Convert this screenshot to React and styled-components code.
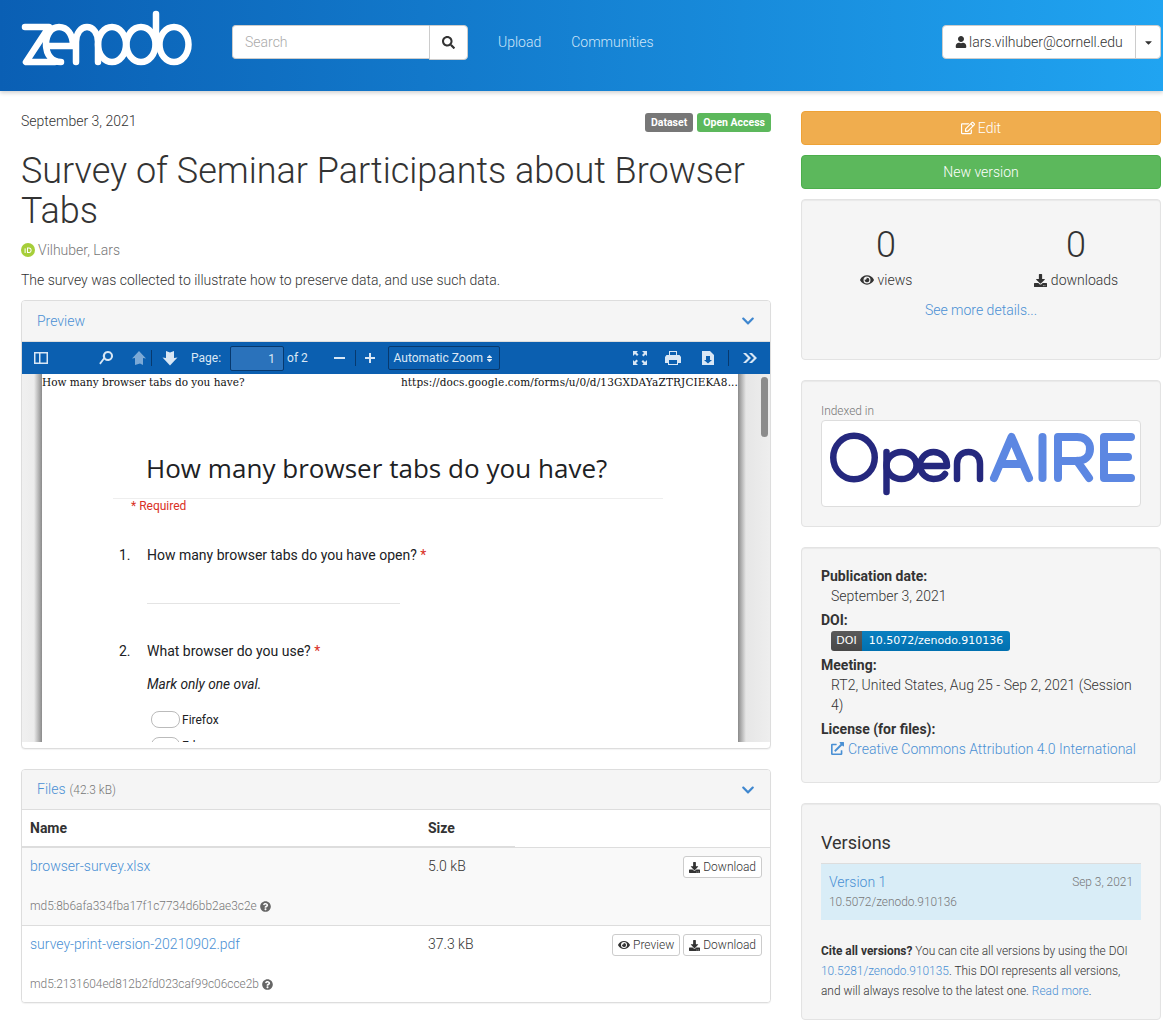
import React from "react"
import styled, { createGlobalStyle } from "styled-components"
import {
  FaSearch,
  FaUser,
  FaRegEdit,
  FaEye,
  FaDownload,
  FaExternalLinkAlt,
  FaQuestionCircle,
  FaChevronDown,
  FaCaretDown,
  FaSort,
} from "react-icons/fa"

const LINK = "#4a90d4"

const GlobalStyle = createGlobalStyle`
  * { box-sizing: border-box; }
  html, body { margin: 0; padding: 0; background: #fff; }
  body {
    font-family: Roboto, "Liberation Sans", sans-serif;
    font-weight: 300;
    font-size: 14px;
    line-height: 20px;
    color: #333;
  }
  a { color: ${LINK}; text-decoration: none; }
`

const TopBar = styled.header`
  height: 91px;
  background: linear-gradient(to right, #0a5fb4, #20a4f1);
  box-shadow: 0 2px 4px rgba(0, 0, 0, 0.18);
  display: flex;
  align-items: flex-start;
  padding: 25px 2px 0 21px;
  position: relative;
`

const Logo = styled.svg`
  width: 172px;
  height: 57px;
  margin-top: -15px;
  flex: none;
`

const SearchGroup = styled.div`
  display: flex;
  margin-left: 39px;
  width: 236px;
`

const SearchInput = styled.div`
  flex: 1;
  height: 34px;
  background: #fff;
  border: 1px solid #ccc;
  border-right: 0;
  border-radius: 4px 0 0 4px;
  padding: 6px 12px;
  color: #aaa;
`

const SearchButton = styled.div`
  width: 39px;
  height: 35px;
  background: #fff;
  border: 1px solid #ccc;
  border-radius: 0 4px 4px 0;
  display: flex;
  align-items: center;
  justify-content: center;
  color: #333;
  font-size: 13px;
`

const NavLink = styled.a`
  color: #cfe5f8;
  margin-left: ${p => p.$gap}px;
  line-height: 34px;
`

const UserMenu = styled.div`
  margin-left: auto;
  display: flex;
  height: 34px;
  background: #fff;
  border: 1px solid #ccc;
  border-radius: 4px;
  width: 219px;
`

const UserName = styled.div`
  flex: 1;
  display: flex;
  align-items: center;
  gap: 2px;
  padding-left: 12px;
  border-right: 1px solid #ccc;
  font-size: 14px;
  svg { font-size: 12px; color: #333; }
`

const Caret = styled.div`
  width: 24px;
  display: flex;
  align-items: center;
  justify-content: center;
  font-size: 11px;
  color: #333;
`

const Page = styled.main`
  display: grid;
  grid-template-columns: 750px 360px;
  column-gap: 30px;
  padding: 20px 0 0 21px;
`

const LeftColumn = styled.div`
  min-width: 0;
`

const RightColumn = styled.aside`
  min-width: 0;
`

const MetaRow = styled.div`
  display: flex;
  justify-content: space-between;
  align-items: flex-start;
`

const Badges = styled.div`
  display: flex;
  gap: 4px;
  padding-top: 2px;
`

const Badge = styled.span`
  background: ${p => p.$bg};
  color: #fff;
  font-weight: 700;
  font-size: 10.5px;
  line-height: 19px;
  height: 19px;
  padding: 0 6px;
  border-radius: 3px;
`

const Title = styled.h1`
  font-size: 36px;
  font-weight: 300;
  line-height: 40px;
  margin: 19px 0 9px;
  color: #333;
`

const Authors = styled.div`
  display: flex;
  align-items: center;
  gap: 3px;
  color: #777;
`

const Description = styled.p`
  margin: 10px 0 10px;
`

const Panel = styled.section`
  border: 1px solid #ddd;
  border-radius: 4px;
  box-shadow: 0 1px 1px rgba(0, 0, 0, 0.05);
  margin-bottom: 20px;
  background: #fff;
  overflow: hidden;
`

const PanelHeading = styled.div`
  height: ${p => p.$height}px;
  padding: 0 15px;
  background: #f5f5f5;
  border-bottom: 1px solid #ddd;
  display: flex;
  align-items: center;
  justify-content: space-between;
  color: ${LINK};
  svg { font-size: 14px; color: #3f87cf; }
  small { font-size: 11.9px; color: #777; margin-left: 4px; }
`

const Viewer = styled.div`
  height: 400px;
  margin-bottom: 6px;
  display: flex;
  flex-direction: column;
`

const ViewerBar = styled.div`
  height: 32px;
  flex: none;
  background: #0b5fb0;
  display: flex;
  align-items: center;
  padding: 0 12px 0 11px;
  color: #dbe8f5;
  font-size: 12px;
  font-weight: 400;
`

const ToolIcon = styled.svg`
  width: 16px;
  height: 16px;
  flex: none;
  margin-left: ${p => p.$left || 0}px;
  fill: #d9e7f5;
  opacity: ${p => (p.$dim ? 0.55 : 1)};
`

const ToolDivider = styled.span`
  width: 1px;
  height: 16px;
  flex: none;
  background: #07396e;
  margin-left: ${p => p.$left || 0}px;
`

const PageLabel = styled.span`
  margin-left: 13px;
`

const PageInput = styled.span`
  width: 54px;
  height: 25px;
  margin-left: 9px;
  background: #2a72bb;
  border: 1px solid #07396e;
  border-radius: 2px;
  text-align: right;
  padding: 2px 8px 0 0;
`

const PageCount = styled.span`
  margin-left: 3px;
`

const ZoomSelect = styled.span`
  width: 112px;
  height: 24px;
  margin-left: 10px;
  border: 1px solid #07396e;
  border-radius: 2px;
  display: flex;
  align-items: center;
  justify-content: center;
  gap: 2px;
  svg { font-size: 9px; }
`

const ToolSpacer = styled.span`
  flex: 1;
`

const ViewerBody = styled.div`
  flex: 1;
  min-height: 0;
  overflow: hidden;
  background: #eee;
  display: flex;
`

const PageGutter = styled.div`
  width: 20px;
  flex: none;
  background: linear-gradient(to right, #f0f0f0 0, #ececec 60%, #8a8a8a 100%);
`

const PdfPage = styled.div`
  width: 696px;
  flex: none;
  background: #fff;
  color: #202124;
  font-weight: 400;
`

const RightGutter = styled.div`
  flex: 1;
  display: flex;
  justify-content: flex-end;
  padding-right: 2px;
  background: linear-gradient(to right, #8a8a8a 0, #e6e6e6 8px, #eee 100%);
`

const ScrollThumb = styled.div`
  width: 7px;
  height: 60px;
  margin-top: 3px;
  border-radius: 4px;
  background: #8c8c8c;
`

const PrintHeader = styled.div`
  display: flex;
  justify-content: space-between;
  font-family: "DejaVu Serif", "Liberation Serif", serif;
  font-size: 10.5px;
  line-height: 14px;
  white-space: nowrap;
  color: #111;
  padding-top: 1px;
`

const PrintUrl = styled.span`
  letter-spacing: 0.12px;
`

const FormTitle = styled.div`
  font-family: "Open Sans", Roboto, sans-serif;
  font-size: 26px;
  line-height: 34px;
  margin: 62px 0 0 104px;
  letter-spacing: 0.03px;
`

const FormRule = styled.div`
  height: 1px;
  background: #eee;
  margin: 13px 75px 0 71px;
`

const Required = styled.div`
  color: #d93025;
  font-size: 12px;
  line-height: 14px;
  margin: 0 0 0 89px;
  padding-top: 0;
`

const Question = styled.div`
  display: grid;
  grid-template-columns: 28px 1fr;
  margin: ${p => p.$top}px 0 0 77px;
  font-size: 14px;
  line-height: 18px;
  span { color: #d93025; }
`

const AnswerLine = styled.div`
  width: 253px;
  height: 1px;
  background: #e4e4e4;
  margin: 39px 0 0 105px;
`

const Hint = styled.div`
  font-style: italic;
  font-size: 13.7px;
  line-height: 16px;
  margin: 16px 0 0 105px;
`

const Oval = styled.div`
  display: flex;
  align-items: center;
  gap: 2px;
  margin: ${p => p.$top}px 0 0 109px;
  font-size: 12px;
  line-height: 16px;
  &::before {
    content: "";
    width: 27px;
    height: 15px;
    border: 1px solid #bbb;
    border-radius: 8px;
  }
`

const FileTable = styled.div`
  display: flex;
  flex-direction: column;
`

const FileHead = styled.div`
  display: grid;
  grid-template-columns: 398px 95px;
  height: 38px;
  padding: 0 0 2px 8px;
  align-items: center;
  font-weight: 700;
  position: relative;
  border-bottom: 1px solid #ddd;
  &::after {
    content: "";
    position: absolute;
    left: 0;
    bottom: -1px;
    width: 493px;
    height: 2px;
    background: #ddd;
  }
`

const FileRow = styled.div`
  display: grid;
  grid-template-columns: 398px 95px 1fr;
  padding: 8px 8px 0;
  height: ${p => p.$height}px;
  background: ${p => (p.$striped ? "#f9f9f9" : "#fff")};
  border-top: ${p => (p.$striped ? "0" : "1px solid #ddd")};
`

const FileName = styled.div`
  display: flex;
  flex-direction: column;
`

const Checksum = styled.small`
  margin-top: 20px;
  font-size: 11.9px;
  line-height: 20px;
  color: #777;
  display: flex;
  align-items: center;
  gap: 3px;
  svg { font-size: 11px; color: #666; }
`

const FileActions = styled.div`
  display: flex;
  justify-content: flex-end;
  gap: 3px;
`

const SmallButton = styled.a`
  height: 22px;
  padding: 0 5px;
  border: 1px solid #ccc;
  border-radius: 3px;
  background: #fff;
  color: #333;
  font-size: 12px;
  line-height: 20px;
  display: flex;
  align-items: center;
  gap: 3px;
  svg { font-size: 11px; }
`

const ActionButton = styled.a`
  height: 34px;
  margin-bottom: 10px;
  border: 1px solid ${p => p.$border};
  border-radius: 4px;
  background: ${p => p.$bg};
  color: #fff;
  display: flex;
  align-items: center;
  justify-content: center;
  gap: 3px;
  svg { font-size: 14px; }
`

const Well = styled.div`
  background: #f5f5f5;
  border: 1px solid #e3e3e3;
  border-radius: 4px;
  box-shadow: inset 0 1px 1px rgba(0, 0, 0, 0.05);
  padding: 19px;
  margin-bottom: 20px;
  height: ${p => (p.$height ? `${p.$height}px` : "auto")};
`

const Stats = styled.div`
  display: grid;
  grid-template-columns: 190px 190px;
  justify-content: center;
  text-align: center;
  margin-top: 6px;
`

const StatNumber = styled.div`
  font-size: 36px;
  line-height: 40px;
`

const StatLabel = styled.div`
  display: flex;
  align-items: center;
  justify-content: center;
  gap: 4px;
  margin-top: 5px;
  svg { font-size: 13px; color: #333; }
`

const DetailsLink = styled.a`
  display: block;
  text-align: center;
  margin-top: 10px;
`

const IndexedLabel = styled.div`
  font-size: 11.9px;
  color: #777;
  height: 20px;
  line-height: 22px;
`

const OpenAireBox = styled.div`
  height: 87px;
  background: #fff;
  border: 1px solid #ddd;
  border-radius: 4px;
`

const OpenAireLogo = styled.svg`
  display: block;
  width: 318px;
  height: 85px;
`

const MetaList = styled.dl`
  margin: -1px 0 0;
`

const MetaTerm = styled.dt`
  font-weight: 700;
  margin-top: ${p => p.$top || 0}px;
`

const MetaValue = styled.dd`
  margin: 0 0 0 10px;
  svg { font-size: 13px; vertical-align: -1px; margin-right: 4px; }
`

const DoiBadge = styled.a`
  display: flex;
  width: fit-content;
  height: 20px;
  margin-top: 1px;
  border-radius: 3px;
  overflow: hidden;
  font-family: "DejaVu Sans", Verdana, sans-serif;
  font-weight: 400;
  font-size: 11px;
  line-height: 20px;
  color: #fff;
`

const DoiLabel = styled.span`
  width: 31px;
  text-align: center;
  background: linear-gradient(#5a5a5a, #484848);
`

const DoiValue = styled.span`
  width: 148px;
  text-align: center;
  background: linear-gradient(#0a80c0, #0070b0);
`

const WellTitle = styled.h4`
  font-size: 18px;
  font-weight: 400;
  line-height: 20px;
  margin: 10px 0 10px;
  color: #333;
`

const VersionRow = styled.div`
  height: 57px;
  background: #d9edf7;
  border-top: 1px solid #ddd;
  padding: 8px;
  display: grid;
  grid-template-columns: 1fr auto;
  small { font-size: 11.9px; color: #777; }
`

const VersionDoi = styled.small`
  grid-column: 1 / -1;
  line-height: 18px;
`

const CiteNote = styled.small`
  display: block;
  margin-top: 21px;
  font-size: 11.9px;
  strong { font-weight: 700; }
`

const OrcidIcon = () => (
  <svg width="14" height="14" viewBox="0 0 14 14">
    <circle cx="7" cy="7" r="7" fill="#a6ce39" />
    <rect x="3.6" y="5.4" width="1" height="4.6" fill="#fff" />
    <path d="M6 4.4h2c1.6 0 2.6 1.2 2.6 2.8S9.6 10 8 10H6zm1 1v3.6h1c1 0 1.6-.8 1.6-1.8S9 5.4 8 5.4z" fill="#fff" />
  </svg>
)

const ZenodoLogo = () => (
  <Logo viewBox="0 0 172 57">
    <g fill="none" stroke="#fff" strokeWidth="6.5" strokeLinecap="round" strokeLinejoin="round">
      <path d="M4 17H28L5 52H34" />
      <path d="M25 36H52C52 24 46 17 38 17C30 17 25 25 25 34C25 45 31 52 40 52" />
      <path d="M55 52V32C55 23 60 17 66 17C72 17 77 23 77 32V52" />
      <ellipse cx="91" cy="34.500" rx="14" ry="17.500" />
      <ellipse cx="120" cy="34.500" rx="14.500" ry="17.500" />
      <path d="M135 4V36" />
      <ellipse cx="153" cy="34.500" rx="14.500" ry="17.500" />
    </g>
  </Logo>
)

const OpenAire = () => (
  <OpenAireLogo viewBox="0 0 318 85">
    <g fill="none" strokeLinecap="round" strokeLinejoin="round">
      <g stroke="#25287e" strokeWidth="6.5">
        <ellipse cx="32" cy="36.500" rx="20.750" ry="21.750" />
        <path d="M64.500 31V71" />
        <ellipse cx="79.500" cy="44.500" rx="15" ry="13.500" />
        <path d="M98 45H125C125 36 119 31 111.500 31C104 31 98 37 98 44.500C98 52 104 58 111.500 58C117 58 121 56 123 53" />
        <path d="M135 58V43C135 35 140 31 146.500 31C153 31 158 35 158 43V58" />
      </g>
      <g stroke="#5c87e2" strokeWidth="8">
        <path d="M172 57L189.500 16L207 57" />
        <path d="M179 43H200" />
        <path d="M220.500 16V57" />
        <path d="M236 57V16H255C263 16 268 21 268 28C268 35 263 40 255 40H236M255 40L267 57" />
        <path d="M309 16H282V57H309M282 36H306" />
      </g>
    </g>
  </OpenAireLogo>
)

const PreviewViewer = () => (
  <Viewer>
    <ViewerBar>
      <ToolIcon viewBox="0 0 16 16">
        <path d="M1 2h14v12H1zm1.500 1.500v9H6v-9zm5 0v9h6v-9z" />
      </ToolIcon>
      <ToolIcon viewBox="0 0 16 16" $left={49}>
        <path d="M10 1a5 5 0 1 1-3.700 8.400L2.600 14.600 1.200 13.300 5.200 8A5 5 0 0 1 10 1zm0 2a3 3 0 1 0 0 6 3 3 0 0 0 0-6z" />
      </ToolIcon>
      <ToolIcon viewBox="0 0 16 16" $left={17} $dim>
        <path d="M8 1l7 7.500-3 -.5V15l-3-1.500L4 15V8L1 8.500z" />
      </ToolIcon>
      <ToolDivider $left={4} />
      <ToolIcon viewBox="0 0 16 16" $left={10}>
        <path d="M8 15.500L0.500 7.500l3.500.5V1l4 1.500L12 1v7l3.500-.5z" />
      </ToolIcon>
      <PageLabel>Page:</PageLabel>
      <PageInput>1</PageInput>
      <PageCount>of 2</PageCount>
      <ToolIcon viewBox="0 0 16 16" $left={24}>
        <rect x="2" y="7" width="11" height="2" />
      </ToolIcon>
      <ToolDivider $left={7} />
      <ToolIcon viewBox="0 0 16 16" $left={6}>
        <path d="M7 3h2v4h4v2H9v4H7V9H3V7h4z" />
      </ToolIcon>
      <ZoomSelect>
        Automatic Zoom <FaSort />
      </ZoomSelect>
      <ToolSpacer />
      <ToolIcon viewBox="0 0 16 16">
        <path d="M1 1h5L4.500 2.500 6.500 4.500 5 6 3 4 1 6zM15 1v5l-1.500-1.500-2 2L10 5l2-2L10 1zM1 15v-5l1.500 1.500 2-2L6 11l-2 2 2 2zM15 15h-5l1.500-1.500-2-2L11 10l2 2 2-2z" />
      </ToolIcon>
      <ToolIcon viewBox="0 0 16 16" $left={17}>
        <path d="M4 1h8v4h2.500L16 7v6h-3v2H3v-2H0V7l1.500-2H4zm1 1v3h6V2zM4 10v4h8v-4z" />
      </ToolIcon>
      <ToolIcon viewBox="0 0 16 16" $left={19}>
        <path d="M2 1h8l4 4v10H2zm4 5v4H4l4 3.500L12 10h-2V6z" />
      </ToolIcon>
      <ToolDivider $left={12} />
      <ToolIcon viewBox="0 0 16 16" $left={13}>
        <path d="M1 3h3l5 5-5 5H1l5-5zM7 3h3l5 5-5 5H7l5-5z" />
      </ToolIcon>
    </ViewerBar>
    <ViewerBody>
      <PageGutter />
      <PdfPage>
        <PrintHeader>
          <span>How many browser tabs do you have?</span>
          <PrintUrl>https://docs.google.com/forms/u/0/d/13GXDAYaZTRJCIEKA8...</PrintUrl>
        </PrintHeader>
        <FormTitle>How many browser tabs do you have?</FormTitle>
        <FormRule />
        <Required>* Required</Required>
        <Question $top={33}>
          <div>1.</div>
          <div>
            How many browser tabs do you have open? <span>*</span>
          </div>
        </Question>
        <AnswerLine />
        <Question $top={38}>
          <div>2.</div>
          <div>
            What browser do you use? <span>*</span>
          </div>
        </Question>
        <Hint>Mark only one oval.</Hint>
        <Oval $top={19}>Firefox</Oval>
        <Oval $top={9}>Edge</Oval>
      </PdfPage>
      <RightGutter>
        <ScrollThumb />
      </RightGutter>
    </ViewerBody>
  </Viewer>
)

const App = () => (
  <>
    <GlobalStyle />
    <TopBar>
      <ZenodoLogo />
      <SearchGroup>
        <SearchInput>Search</SearchInput>
        <SearchButton>
          <FaSearch />
        </SearchButton>
      </SearchGroup>
      <NavLink $gap={30}>Upload</NavLink>
      <NavLink $gap={30}>Communities</NavLink>
      <UserMenu>
        <UserName>
          <FaUser /> lars.vilhuber@cornell.edu
        </UserName>
        <Caret>
          <FaCaretDown />
        </Caret>
      </UserMenu>
    </TopBar>
    <Page>
      <LeftColumn>
        <MetaRow>
          <span>September 3, 2021</span>
          <Badges>
            <Badge $bg="#777">Dataset</Badge>
            <Badge $bg="#5cb85c">Open Access</Badge>
          </Badges>
        </MetaRow>
        <Title>Survey of Seminar Participants about Browser Tabs</Title>
        <Authors>
          <OrcidIcon /> Vilhuber, Lars
        </Authors>
        <Description>The survey was collected to illustrate how to preserve data, and use such data.</Description>
        <Panel>
          <PanelHeading $height={41}>
            <span>Preview</span>
            <FaChevronDown />
          </PanelHeading>
          <PreviewViewer />
        </Panel>
        <Panel>
          <PanelHeading $height={40}>
            <span>
              Files<small>(42.3 kB)</small>
            </span>
            <FaChevronDown />
          </PanelHeading>
          <FileTable>
            <FileHead>
              <span>Name</span>
              <span>Size</span>
            </FileHead>
            <FileRow $striped $height={77}>
              <FileName>
                <a>browser-survey.xlsx</a>
                <Checksum>
                  md5:8b6afa334fba17f1c7734d6bb2ae3c2e <FaQuestionCircle />
                </Checksum>
              </FileName>
              <span>5.0 kB</span>
              <FileActions>
                <SmallButton>
                  <FaDownload /> Download
                </SmallButton>
              </FileActions>
            </FileRow>
            <FileRow $height={77}>
              <FileName>
                <a>survey-print-version-20210902.pdf</a>
                <Checksum>
                  md5:2131604ed812b2fd023caf99c06cce2b <FaQuestionCircle />
                </Checksum>
              </FileName>
              <span>37.3 kB</span>
              <FileActions>
                <SmallButton>
                  <FaEye size={12} /> Preview
                </SmallButton>
                <SmallButton>
                  <FaDownload /> Download
                </SmallButton>
              </FileActions>
            </FileRow>
          </FileTable>
        </Panel>
      </LeftColumn>
      <RightColumn>
        <ActionButton $bg="#f0ad4e" $border="#eea236">
          <FaRegEdit /> Edit
        </ActionButton>
        <ActionButton $bg="#5cb85c" $border="#4cae4c">
          New version
        </ActionButton>
        <Well $height={161}>
          <Stats>
            <div>
              <StatNumber>0</StatNumber>
              <StatLabel>
                <FaEye size={14} /> views
              </StatLabel>
            </div>
            <div>
              <StatNumber>0</StatNumber>
              <StatLabel>
                <FaDownload /> downloads
              </StatLabel>
            </div>
          </Stats>
          <DetailsLink>See more details...</DetailsLink>
        </Well>
        <Well $height={147}>
          <IndexedLabel>Indexed in</IndexedLabel>
          <OpenAireBox>
            <OpenAire />
          </OpenAireBox>
        </Well>
        <Well $height={236}>
          <MetaList>
            <MetaTerm>Publication date:</MetaTerm>
            <MetaValue>September 3, 2021</MetaValue>
            <MetaTerm $top={4}>DOI:</MetaTerm>
            <MetaValue>
              <DoiBadge>
                <DoiLabel>DOI</DoiLabel>
                <DoiValue>10.5072/zenodo.910136</DoiValue>
              </DoiBadge>
            </MetaValue>
            <MetaTerm $top={4}>Meeting:</MetaTerm>
            <MetaValue>RT2, United States, Aug 25 - Sep 2, 2021 (Session 4)</MetaValue>
            <MetaTerm $top={4}>License (for files):</MetaTerm>
            <MetaValue>
              <a>
                <FaExternalLinkAlt />
                Creative Commons Attribution 4.0 International
              </a>
            </MetaValue>
          </MetaList>
        </Well>
        <Well $height={217}>
          <WellTitle>Versions</WellTitle>
          <VersionRow>
            <a>Version 1</a>
            <small>Sep 3, 2021</small>
            <VersionDoi>10.5072/zenodo.910136</VersionDoi>
          </VersionRow>
          <CiteNote>
            <strong>Cite all versions?</strong> You can cite all versions by using the DOI <a>10.5281/zenodo.910135</a>. This DOI represents all versions, and will always resolve to the latest one. <a>Read more</a>.
          </CiteNote>
        </Well>
      </RightColumn>
    </Page>
  </>
)

export default App
